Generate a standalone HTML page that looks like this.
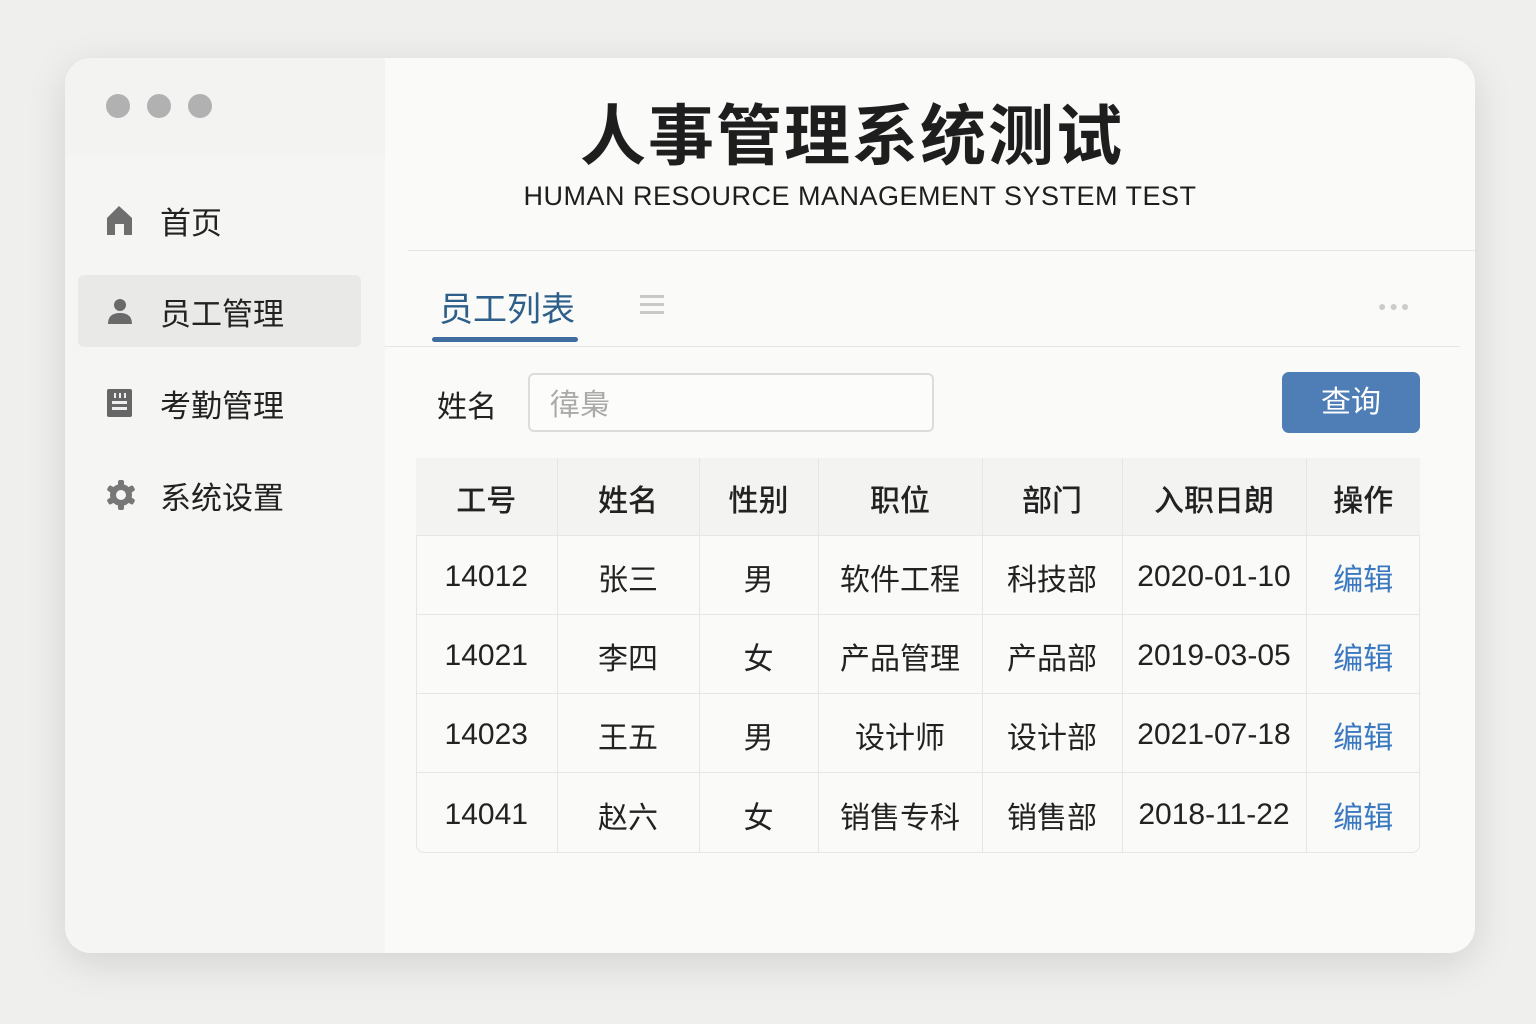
<!DOCTYPE html>
<html><head><meta charset="utf-8"><style>
*{margin:0;padding:0;box-sizing:border-box}
body{width:1536px;height:1024px;background:#efefed;font-family:"Liberation Sans","Noto Sans CJK SC",sans-serif;position:relative;overflow:hidden;color:#222}
.win{position:absolute;left:65px;top:58px;width:1410px;height:895px;border-radius:26px;background:#fafaf8;box-shadow:0 10px 40px rgba(0,0,0,.12);overflow:hidden}
.side{position:absolute;left:0;top:0;width:320px;height:895px;background:#f5f5f3}
.side .hd{position:absolute;left:0;top:0;width:320px;height:97px;background:#f3f3f1}
.dot{position:absolute;top:36px;width:24px;height:24px;border-radius:50%;background:#b1b1b1}
.item{position:absolute;left:13px;width:283px;height:72px;border-radius:6px;display:flex;align-items:center;font-size:31px;color:#222}
.item svg{position:absolute;left:27px}
.item span{position:absolute;left:82px}
.abs{position:absolute}
table{position:absolute;left:351px;top:400px;width:1004px;border-collapse:collapse;font-size:30px;text-align:center}
.tb{position:absolute;left:351px;top:400px;width:1004px;height:395px;border:1px solid #e6e6e4;border-radius:8px}
td,th{border-right:1px solid #e6e6e4;border-bottom:1px solid #e6e6e4;font-weight:400;height:79px;padding-top:4px}
th{background:#f3f3f1;height:77px;color:#222;font-weight:500}
td:last-child,th:last-child{border-right:none}
tr:last-child td{border-bottom:none;height:81px}
.e{color:#3a78c0}
</style></head><body>
<div class="win">
<div class="side"><div class="hd"></div>
<div class="dot" style="left:41px"></div><div class="dot" style="left:82px"></div><div class="dot" style="left:123px"></div>
<div class="item" style="top:126px"><svg width="30" height="32" viewBox="0 0 30 32"><path d="M2 14 L14 2 L27 14 V31 H19 V20 H10 V31 H2Z" fill="#6e6e6e"/></svg><span>首页</span></div>
<div class="item" style="top:217px;background:#e9e9e7"><svg width="30" height="30" viewBox="0 0 30 30"><circle cx="15" cy="9" r="6" fill="#6a6a6a"/><path d="M3 28 Q3 17 15 17 Q27 17 27 28Z" fill="#6a6a6a"/></svg><span>员工管理</span></div>
<div class="item" style="top:309px"><svg width="30" height="32" viewBox="0 0 30 32"><rect x="2" y="2" width="25" height="28" rx="2" fill="#666"/><rect x="7" y="14" width="15" height="3" fill="#eee"/><rect x="7" y="20" width="15" height="3" fill="#eee"/><rect x="9" y="6" width="2" height="5" fill="#eee"/><rect x="14" y="6" width="2" height="5" fill="#eee"/><rect x="19" y="6" width="2" height="5" fill="#eee"/></svg><span>考勤管理</span></div>
<div class="item" style="top:401px"><svg width="32" height="32" viewBox="0 0 32 32"><g fill="#777"><circle cx="16" cy="16" r="11"/><rect x="13" y="1" width="6" height="30" rx="2"/><rect x="13" y="1" width="6" height="30" rx="2" transform="rotate(60 16 16)"/><rect x="13" y="1" width="6" height="30" rx="2" transform="rotate(120 16 16)"/></g><circle cx="16" cy="16" r="5" fill="#f5f5f3"/></svg><span>系统设置</span></div>
</div>
<div class="abs" style="left:320px;top:25px;width:934px;text-align:center;font-size:66px;font-weight:700;letter-spacing:2px;color:#1e1e1e">人事管理系统测试</div>
<div class="abs" style="left:340px;top:123px;width:910px;text-align:center;font-size:27px;letter-spacing:0.5px;color:#1e1e1e">HUMAN RESOURCE MANAGEMENT SYSTEM TEST</div>
<div class="abs" style="left:343px;top:192px;width:1067px;height:1px;background:#e6e6e4"></div>
<div class="abs" style="left:374px;top:224px;font-size:34px;color:#2e5f8a">员工列表</div>
<div class="abs" style="left:367px;top:279px;width:146px;height:5px;border-radius:3px;background:#3f6d9f"></div>
<div class="abs" style="left:575px;top:237px;width:24px;height:3px;background:#c8c8c8;box-shadow:0 8px 0 #c8c8c8,0 16px 0 #c8c8c8"></div>
<div class="abs" style="left:1313px;top:240px;font-size:14px;color:#ccc;letter-spacing:3px">●●●</div>
<div class="abs" style="left:320px;top:288px;width:1075px;height:1px;background:#e6e6e4"></div>
<div class="abs" style="left:372px;top:324px;font-size:30px">姓名</div>
<div class="abs" style="left:463px;top:315px;width:406px;height:59px;border:2px solid #dcdcdc;border-radius:6px;background:#fcfcfb;font-size:30px;color:#aaa;padding:5px 20px">徫梟</div>
<div class="abs" style="left:1217px;top:314px;width:138px;height:61px;border-radius:7px;background:#4f7db5;color:#fff;font-size:30px;text-align:center;line-height:61px">查询</div>
<div class="tb"></div>
<table>
<colgroup><col style="width:141px"><col style="width:142px"><col style="width:119px"><col style="width:164px"><col style="width:140px"><col style="width:184px"><col style="width:114px"></colgroup>
<tr><th>工号</th><th>姓名</th><th>性别</th><th>职位</th><th>部门</th><th>入职日朗</th><th>操作</th></tr>
<tr><td>14012</td><td>张三</td><td>男</td><td>软件工程</td><td>科技部</td><td>2020-01-10</td><td class="e">编辑</td></tr>
<tr><td>14021</td><td>李四</td><td>女</td><td>产品管理</td><td>产品部</td><td>2019-03-05</td><td class="e">编辑</td></tr>
<tr><td>14023</td><td>王五</td><td>男</td><td>设计师</td><td>设计部</td><td>2021-07-18</td><td class="e">编辑</td></tr>
<tr><td>14041</td><td>赵六</td><td>女</td><td>销售专科</td><td>销售部</td><td>2018-11-22</td><td class="e">编辑</td></tr>
</table>
</div>
</body></html>
